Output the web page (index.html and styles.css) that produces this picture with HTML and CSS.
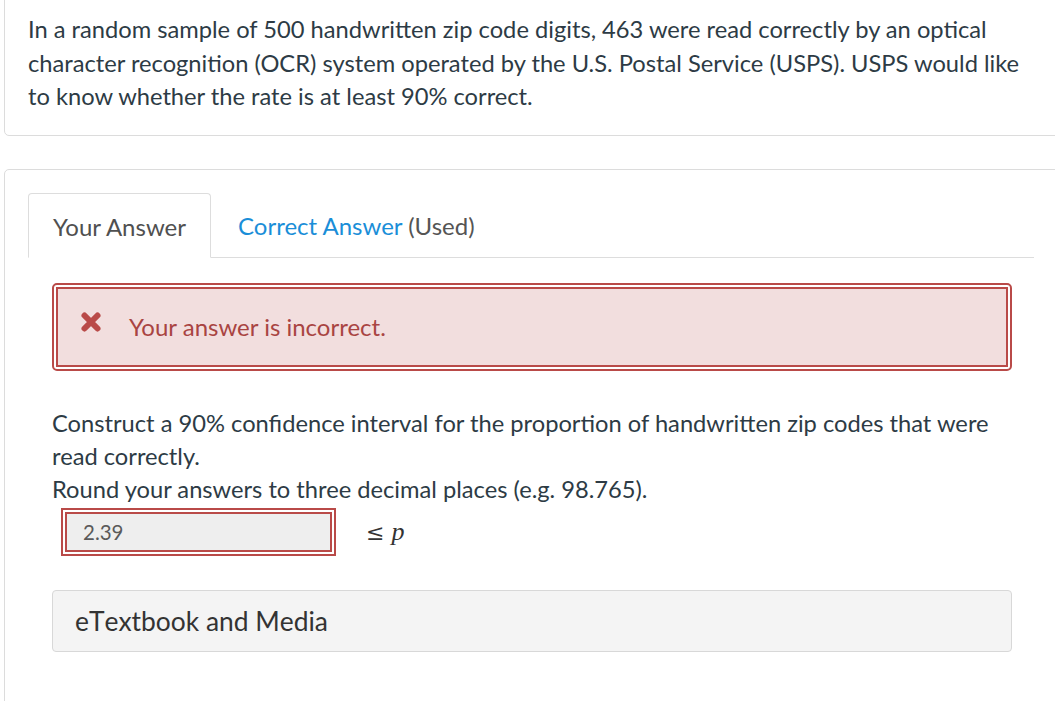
FILE: index.html
```html
<!DOCTYPE html>
<html lang="en">
<head>
<meta charset="utf-8">
<title>Question</title>
<link rel="stylesheet" href="styles.css">
</head>
<body>
<div class="page">
  <section class="card card-question">
    <p class="question-text">In a random sample of 500 handwritten zip code digits, 463 were read correctly by an optical character recognition (OCR) system operated by the U.S. Postal Service (USPS). USPS would like to know whether the rate is at least 90% correct.</p>
  </section>

  <section class="card card-answer">
    <div class="tabs">
      <div class="tab tab-active">Your Answer</div>
      <div class="tab tab-other"><span class="tab-link">Correct Answer</span> (Used)</div>
      <div class="tab-fill"></div>
    </div>

    <div class="body">
      <div class="alert">
        <div class="alert-inner">
          <svg class="alert-icon" viewBox="0 0 22 22" width="22" height="22" aria-hidden="true">
            <path d="M4.5 4.5 L17.5 17.5 M17.5 4.5 L4.5 17.5" fill="none" stroke="#b94a48" stroke-width="6" stroke-linecap="round"/>
          </svg>
          <span class="alert-text">Your answer is incorrect.</span>
        </div>
      </div>

      <p class="prompt">Construct a 90% confidence interval for the proportion of handwritten zip codes that were read correctly.<br>Round your answers to three decimal places (e.g. 98.765).</p>

      <div class="answer-row">
        <div class="input-wrap">
          <div class="input-inner">2.39</div>
        </div>
        <span class="math">&le; <i>p</i></span>
      </div>

      <div class="media">eTextbook and Media</div>
    </div>
  </section>
</div>
</body>
</html>
```

FILE: styles.css
```css
html, body {
  margin: 0;
  padding: 0;
  background: #ffffff;
}

body {
  font-family: Lato, "Open Sans", "Liberation Sans", sans-serif;
  color: #333a40;
  width: 1055px;
  height: 701px;
  overflow: hidden;
}

.page {
  padding-left: 4px;
  display: flex;
  flex-direction: column;
  gap: 33px;
  margin-top: -11px;
}

.card {
  border: 1px solid #dcdcdc;
  border-radius: 5px;
  background: #fff;
  width: 1060px;
  box-sizing: border-box;
}

.card-question {
  padding: 23px 0 21px 23px;
}

.question-text {
  margin: 0;
  width: 1010px;
  font-size: 23.7px;
  line-height: 33.5px;
  color: #2d3b45;
}

.card-answer {
  height: 560px;
  padding: 23px 0 0 23px;
}

.tabs {
  display: flex;
  align-items: flex-end;
  width: 1006px;
}

.tab {
  font-size: 24px;
  color: #555;
  height: 65px;
  line-height: 65px;
  box-sizing: border-box;
  border-bottom: 1px solid #ddd;
}

.tab-active {
  border: 1px solid #ddd;
  border-bottom: 1px solid #fff;
  border-radius: 4px 4px 0 0;
  color: #505050;
  padding: 0 0 0 24px;
  width: 183px;
}

.tab-other {
  padding: 0 0 0 27px;
}

.tab-link {
  color: #1a8ed8;
}

.tab-fill {
  flex: 1;
  border-bottom: 1px solid #ddd;
}

.body {
  padding: 25px 0 0 24px;
  width: 960px;
}

.alert {
  border: 2px solid #b94a48;
  border-radius: 5px;
  padding: 2px;
  background: #fff;
}

.alert-inner {
  border: 2px solid #b94a48;
  background: #f2dede;
  height: 80px;
  box-sizing: border-box;
  display: flex;
  align-items: center;
  padding-left: 22px;
  gap: 27px;
}

.alert-icon {
  flex: none;
  margin-top: -10px;
}

.alert-text {
  font-size: 24px;
  color: #a94442;
}

.prompt {
  margin: 36px 0 0 0;
  font-size: 23.7px;
  line-height: 33px;
  color: #2d3b45;
}

.answer-row {
  display: flex;
  align-items: center;
  margin-top: 2px;
  padding-left: 9px;
  gap: 30px;
}

.input-wrap {
  border: 2px solid #b94a48;
  padding: 2px;
  background: #fff;
  width: 275px;
  box-sizing: border-box;
}

.input-inner {
  border: 2px solid #b94a48;
  background: #eeeeee;
  height: 40px;
  line-height: 36px;
  box-sizing: border-box;
  padding-left: 16px;
  font-size: 20.5px;
  color: #5a5a5a;
}

.math {
  font-family: "DejaVu Serif", "Liberation Serif", serif;
  font-size: 22px;
  color: #333;
}

.math i {
  font-family: "Liberation Serif", serif;
  font-size: 26px;
}

.media {
  margin-top: 34px;
  border: 1px solid #d8d8d8;
  border-radius: 4px;
  background: #f4f4f4;
  height: 62px;
  box-sizing: border-box;
  padding-left: 22px;
  line-height: 60px;
  font-size: 26.4px;
  font-kerning: none;
  color: #333;
}
```
